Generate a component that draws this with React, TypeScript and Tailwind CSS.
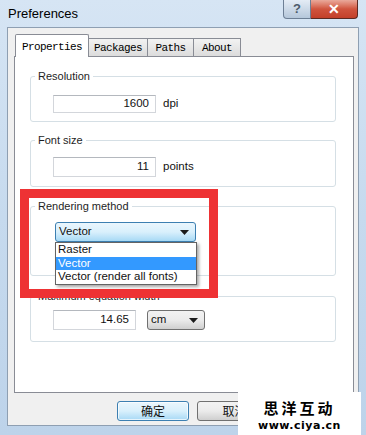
import React from "react";

const ui = { fontFamily: '"Liberation Sans", "Noto Sans CJK SC", sans-serif' };
const mono = { fontFamily: '"Liberation Mono", monospace' };
const cjk = { fontFamily: '"Noto Sans CJK SC", sans-serif' };

function Arrow() {
  return (
    <svg width="9" height="5" viewBox="0 0 9 5" className="shrink-0">
      <path d="M0 0 H9 L4.5 5 Z" fill="#1a1a1a" />
    </svg>
  );
}

function Group({
  label,
  className,
  children,
}: {
  label: string;
  className: string;
  children: React.ReactNode;
}) {
  return (
    <div className={`relative border border-[#d5dfe5] rounded-[3px] ${className}`}>
      <span className="absolute -top-[8px] left-[4px] bg-white px-[3px] text-[11px] leading-[14px] text-[#1e1e1e]">
        {label}
      </span>
      {children}
    </div>
  );
}

function NumBox({ value, className }: { value: string; className: string }) {
  return (
    <div
      className={`border border-[#d3d6db] border-t-[#b4b8be] bg-white flex items-center justify-end pr-[6px] text-[11.5px] text-[#111] ${className}`}
    >
      {value}
    </div>
  );
}

export default function App() {
  const tabs = [
    { name: "Packages", w: "w-[59px]" },
    { name: "Paths", w: "w-[46px]" },
    { name: "About", w: "w-[47px]" },
  ];

  return (
    <div
      className="relative w-[366px] h-[435px] overflow-hidden bg-gradient-to-b from-[#d6e5f4] via-[#c6daee] to-[#bdd3ea] flex flex-col"
      style={ui}
    >
      {/* TITLE BAR */}
      <div className="h-[27px] flex justify-between shrink-0">
        <span className="pl-[8px] pt-[6px] text-[13px] leading-[16px] text-[#000]">Preferences</span>
        <div className="flex h-[19px] mr-[8px]">
          <div className="w-[28px] h-full rounded-bl-[4px] border border-t-0 border-[#6d7f95] bg-gradient-to-b from-[#e4ecf5] to-[#b5c7da] flex items-center justify-center text-[13px] font-bold text-[#4d5b6a]">
            ?
          </div>
          <div className="w-[47px] h-full rounded-br-[4px] border border-t-0 border-l-0 border-[#5b2a23] bg-gradient-to-b from-[#e9a99b] via-[#d0543e] to-[#c3402a] flex items-center justify-center text-[14px] font-bold text-white">
            ✕
          </div>
        </div>
      </div>

      {/* CLIENT AREA */}
      <div className="mx-[7px] h-[399px] border border-[#8e9fb2] bg-[#f0f0f0] flex flex-col pl-[6px] pr-[4px] pt-[6px]">
        {/* tabs */}
        <div className="flex items-end h-[22px] relative z-10 pl-[1px]">
          <div
            className="w-[74px] h-[23px] -mb-[1px] border border-b-0 border-[#898c95] bg-white rounded-t-[2px] flex items-start justify-center pt-[4px] text-[11px] tracking-[-0.6px] text-[#000]"
            style={mono}
          >
            Properties
          </div>
          {tabs.map((t) => (
            <div
              key={t.name}
              className={`${t.w} h-[18px] border border-l-0 border-b-0 border-[#898c95] bg-gradient-to-b from-[#f2f2f2] to-[#dcdcdc] flex items-center justify-center pt-[2px] text-[11px] tracking-[-0.6px] text-[#000]`}
              style={mono}
            >
              {t.name}
            </div>
          ))}
        </div>

        {/* panel */}
        <div className="h-[337px] border border-[#898c95] bg-white pl-[15px] pr-[17px] pt-[19px] flex flex-col">
          <Group label="Resolution" className="h-[46px] pt-[18px] pl-[22px]">
            <div className="flex items-center">
              <NumBox value="1600" className="w-[103px] h-[18px]" />
              <span className="ml-[7px] text-[11.5px] text-[#111]">dpi</span>
            </div>
          </Group>

          <Group label="Font size" className="mt-[18px] h-[47px] pt-[16px] pl-[22px]">
            <div className="flex items-center">
              <NumBox value="11" className="w-[103px] h-[20px]" />
              <span className="ml-[7px] text-[11.5px] text-[#111]">points</span>
            </div>
          </Group>

          <Group label="Rendering method" className="mt-[19px] h-[70px] pt-[15px] pl-[24px]">
            <div className="relative w-[141px]">
              <div className="h-[20px] rounded-[3px] border border-[#3c7fb1] bg-gradient-to-b from-[#eaf6fd] via-[#d9f0fc] to-[#a7d9f5] flex items-center justify-between pl-[3px] pr-[6px] text-[11.5px] text-[#111]">
                <span>Vector</span>
                <Arrow />
              </div>
              {/* open dropdown list */}
              <div className="absolute left-0 top-[20px] w-[142px] border border-[#646464] bg-white shadow-[2px_2px_3px_rgba(0,0,0,0.35)] text-[11.5px] leading-[13.5px] text-[#111] z-20">
                <div className="pl-[2px]">Raster</div>
                <div className="pl-[2px] bg-[#3399ff] text-white">Vector</div>
                <div className="pl-[2px]">Vector (render all fonts)</div>
              </div>
            </div>
          </Group>

          <Group label="Maximum equation width" className="mt-[20px] h-[46px] pt-[13px] pl-[22px]">
            <div className="flex items-center">
              <NumBox value="14.65" className="w-[83px] h-[20px]" />
              <div className="ml-[11px] w-[58px] h-[20px] rounded-[3px] border border-[#707070] bg-gradient-to-b from-[#f2f2f2] via-[#ebebeb] to-[#cfcfcf] flex items-center justify-between pl-[3px] pr-[6px] text-[11.5px] text-[#111]">
                <span>cm</span>
                <Arrow />
              </div>
            </div>
          </Group>
        </div>

        {/* buttons */}
        <div className="flex gap-[8px] pl-[103px] mt-[8px]">
          <div
            className="w-[72px] h-[20px] rounded-[3px] border border-[#3c7fb1] bg-gradient-to-b from-[#eaf6fd] via-[#d9f0fc] to-[#a7d9f5] flex items-center justify-center text-[12px] text-[#111] shadow-[inset_0_0_0_1px_rgba(255,255,255,0.7)]"
            style={cjk}
          >
            确定
          </div>
          <div
            className="w-[75px] h-[20px] rounded-[3px] border border-[#707070] bg-gradient-to-b from-[#f2f2f2] via-[#ebebeb] to-[#cfcfcf] flex items-center justify-center text-[12px] text-[#111]"
            style={cjk}
          >
            取消
          </div>
        </div>
      </div>

      {/* red highlight rectangle */}
      <div className="absolute left-[20px] top-[189px] w-[198px] h-[109px] border-[9px] border-[#ee3234] z-30" />

      {/* watermark */}
      <div className="absolute left-[238px] top-[392px] w-[123px] h-[43px] bg-white flex flex-col items-center pt-[5px] z-40">
        <span className="block text-[15px] leading-[22px] font-bold tracking-[3px] text-black" style={cjk}>
          思洋互动
        </span>
        <span
          className="block text-[11px] leading-[13px] font-bold text-black tracking-[0.5px]"
          style={{ fontFamily: '"DejaVu Sans", sans-serif' }}
        >
          www.ciya.cn
        </span>
      </div>
    </div>
  );
}
